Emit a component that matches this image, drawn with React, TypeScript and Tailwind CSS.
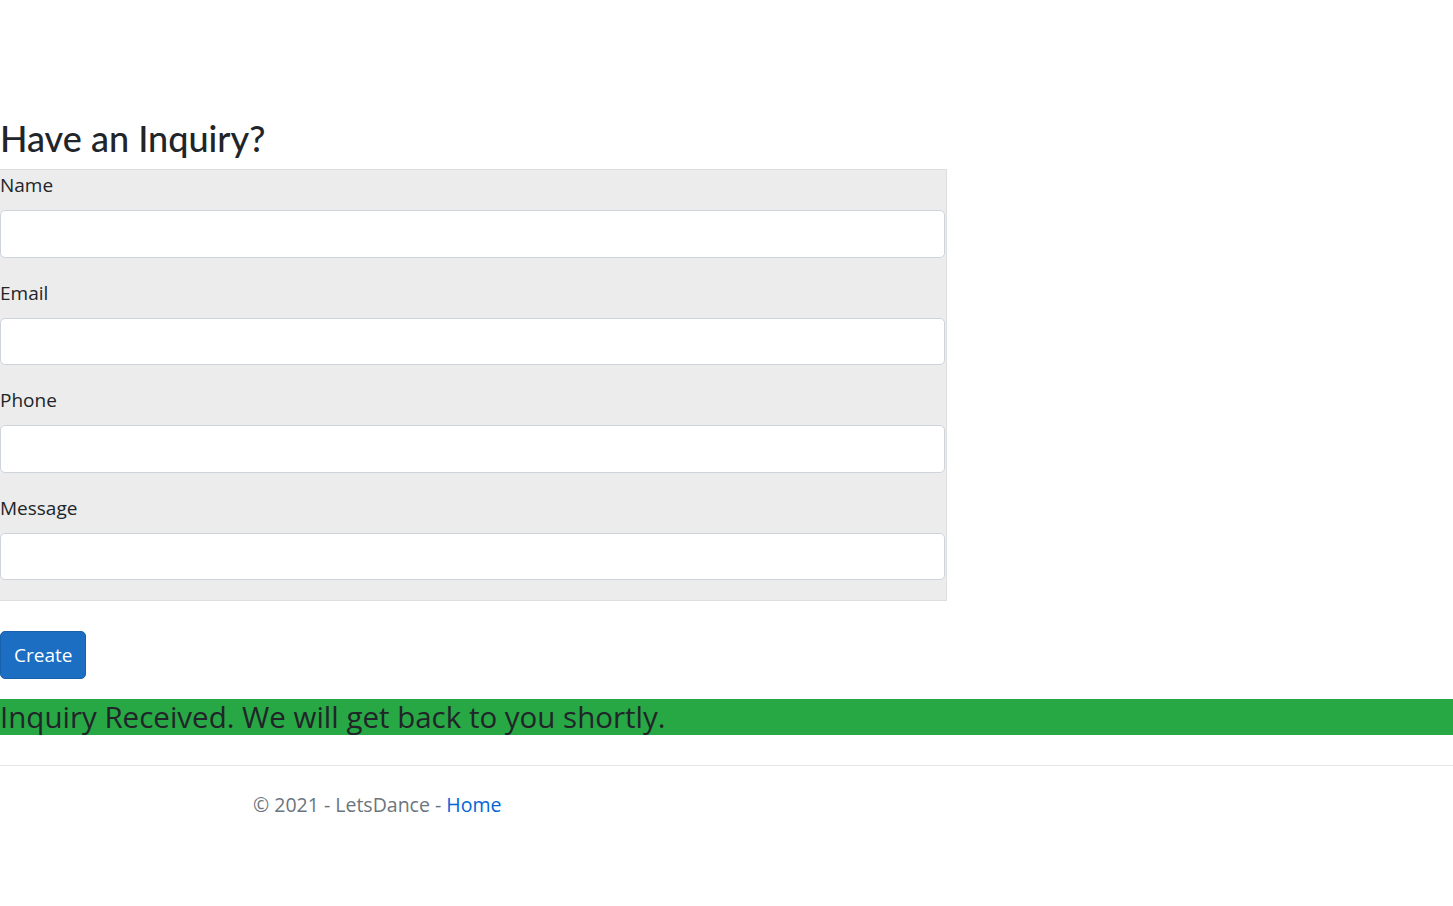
export default function App() {
  const fields = ["Name", "Email", "Phone", "Message"];

  return (
    <div
      className="min-h-screen bg-white text-[#212529]"
      style={{ fontFamily: '"Open Sans", "Noto Sans", sans-serif' }}
    >
      <div className="pt-[114px]">
        <h2
          className="mb-[7px] text-[36px] leading-[48px] font-medium"
          style={{ fontFamily: 'Lato, "Open Sans", sans-serif' }}
        >
          Have an Inquiry?
        </h2>

        <form className="w-[947px] border border-l-0 border-[#dedede] bg-[#ececec]">
          {fields.map((f) => (
            <div key={f} className="mb-5">
              <label className="mb-[10px] block text-[19px] leading-[30px]">{f}</label>
              <input
                type="text"
                className="block h-[47.5px] w-[945px] rounded-[5px] border border-[#ced4da] bg-white px-[15px] text-[19px]"
              />
            </div>
          ))}
        </form>

        <div className="mt-[30px]">
          <button className="h-[47.5px] rounded-[5px] border border-[#1861ac] bg-[#1b6ec2] px-[13px] text-[19px] text-white">
            Create
          </button>
        </div>

        <h4 className="mt-[20px] bg-[#28a745] text-[29.5px] leading-[36px] font-medium">
          Inquiry Received. We will get back to you shortly.
        </h4>

        <footer className="mt-[30px] border-t border-[#e5e5e5] pl-[253px] text-[19.5px] leading-[78px] text-[#6c757d]">
          © 2021 - LetsDance - <a className="text-[#0366d6]">Home</a>
        </footer>
      </div>
    </div>
  );
}
